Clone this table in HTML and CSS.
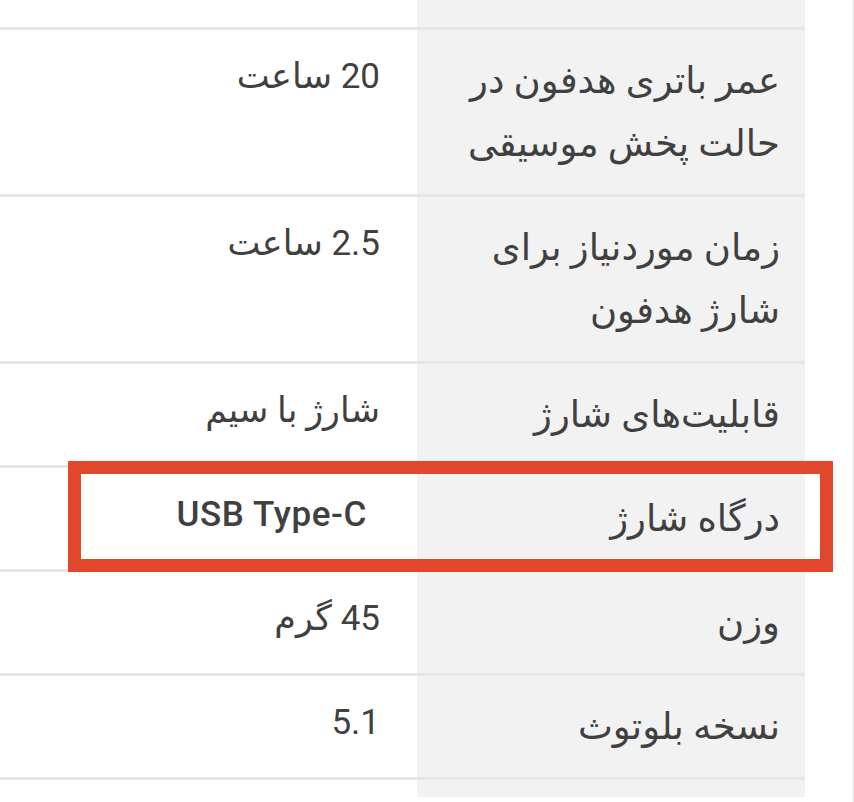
FILE: index.html
```html
<!DOCTYPE html>
<html lang="fa" dir="rtl">
<head>
<meta charset="utf-8">
<title>مشخصات</title>
<link rel="stylesheet" href="styles.css">
</head>
<body>
<div class="page">
  <div class="specs">
    <div class="row stub-top"><div class="label"></div><div class="value"></div></div>
    <div class="row">
      <div class="label">عمر باتری هدفون در حالت پخش موسیقی</div>
      <div class="value">20 ساعت</div>
    </div>
    <div class="row">
      <div class="label">زمان موردنیاز برای شارژ هدفون</div>
      <div class="value">2.5 ساعت</div>
    </div>
    <div class="row">
      <div class="label">قابلیت‌های شارژ</div>
      <div class="value">شارژ با سیم</div>
    </div>
    <div class="row highlighted">
      <div class="label">درگاه شارژ</div>
      <div class="value latin">USB Type-C</div>
      <div class="highlight-box"></div>
    </div>
    <div class="row">
      <div class="label">وزن</div>
      <div class="value">45 گرم</div>
    </div>
    <div class="row">
      <div class="label">نسخه بلوتوث</div>
      <div class="value">5.1</div>
    </div>
    <div class="row stub-bottom"><div class="label"></div><div class="value"></div></div>
  </div>
</div>
</body>
</html>
```

FILE: styles.css
```css
html, body {
  margin: 0;
  padding: 0;
  background: #ffffff;
}

body {
  font-family: Roboto, "DejaVu Sans", sans-serif;
  color: #404040;
}

.page {
  width: 854px;
  height: 802px;
  border-right: 1px solid #e2e2e2;
  box-sizing: border-box;
  display: flex;
  flex-direction: row;
  direction: rtl;
  padding-right: 48px;
}

.specs {
  width: 805px;
  display: flex;
  flex-direction: column;
}

.row {
  position: relative;
  display: grid;
  grid-template-columns: 388px 1fr;
  border-bottom: 3px solid #e6e6e6;
}

.label {
  background: #f2f2f2;
  padding: 19px 25px 19px 8px;
  font-size: 37px;
  line-height: 63px;
  text-align: right;
}

.value {
  padding: 15px 37px 19px 20px;
  font-size: 35px;
  line-height: 63px;
  text-align: right;
}

.value.latin {
  padding-right: 50px;
  font-weight: 500;
  letter-spacing: 0.6px;
}

.stub-top .label,
.stub-top .value {
  height: 27px;
  padding: 0;
}

.stub-bottom {
  border-bottom: none;
}

.stub-bottom .label,
.stub-bottom .value {
  height: 17px;
  padding: 0;
}

.highlight-box {
  position: absolute;
  top: -7px;
  bottom: -3px;
  left: 68px;
  right: -28px;
  border: 13px solid #e1472c;
  pointer-events: none;
}
```
